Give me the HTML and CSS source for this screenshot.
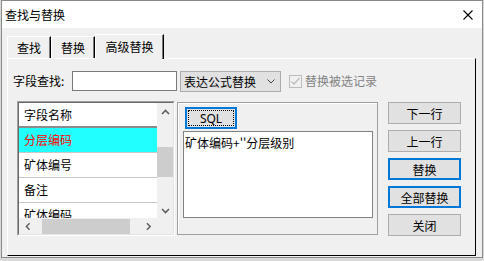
FILE: index.html
```html
<!DOCTYPE html>
<html lang="zh-CN">
<head>
    <meta charset="UTF-8">
    <meta name="viewport" content="width=device-width, initial-scale=1.0">
    <title>查找与替换</title>
    <link rel="stylesheet" href="styles.css">
</head>
<body>
    <div class="window">
        <div class="titlebar">
            <span class="title">查找与替换</span>
            <svg class="close" width="10" height="10" viewBox="0 0 10 10">
                <path d="M0.5 0.5 L9.5 9.5 M9.5 0.5 L0.5 9.5" stroke="#000" stroke-width="1.1" fill="none"/>
            </svg>
        </div>
        <div class="client">
            <div class="tabs">
                <div class="tab">查找</div>
                <div class="tab">替换</div>
                <div class="tab active">高级替换</div>
            </div>
            <div class="panel">
                <div class="search-row">
                    <span class="field-label">字段查找:</span>
                    <input class="field-input" type="text">
                    <div class="combo">
                        <span>表达公式替换</span>
                        <svg width="8" height="5" viewBox="0 0 8 5">
                            <path d="M0.5 0.5 L4 4 L7.5 0.5" stroke="#444" fill="none"/>
                        </svg>
                    </div>
                    <span class="checkbox">
                        <svg width="11" height="11" viewBox="0 0 11 11">
                            <path d="M1.5 5.5 L4 8 L9.5 2" stroke="#bdbdbd" stroke-width="1.3" fill="none"/>
                        </svg>
                    </span>
                    <span class="check-label">替换被选记录</span>
                </div>

                <div class="work-row">
                    <div class="list">
                        <div class="list-inner">
                            <div class="list-rows">
                                <div class="list-head">字段名称</div>
                                <div class="list-item selected">分层编码</div>
                                <div class="list-item">矿体编号</div>
                                <div class="list-item">备注</div>
                                <div class="list-item">矿体编码</div>
                            </div>
                            <div class="vscroll">
                                <svg class="arrow-up" width="9" height="6" viewBox="0 0 9 6">
                                    <path d="M1 5 L4.5 1.5 L8 5" stroke="#606060" stroke-width="1.6" fill="none"/>
                                </svg>
                                <div class="vthumb"></div>
                                <svg class="arrow-down" width="9" height="6" viewBox="0 0 9 6">
                                    <path d="M1 1 L4.5 4.5 L8 1" stroke="#606060" stroke-width="1.6" fill="none"/>
                                </svg>
                            </div>
                            <div class="hscroll">
                                <svg width="6" height="9" viewBox="0 0 6 9">
                                    <path d="M5 1 L1.5 4.5 L5 8" stroke="#606060" stroke-width="1.6" fill="none"/>
                                </svg>
                                <div class="hthumb"></div>
                                <svg width="6" height="9" viewBox="0 0 6 9">
                                    <path d="M1 1 L4.5 4.5 L1 8" stroke="#606060" stroke-width="1.6" fill="none"/>
                                </svg>
                            </div>
                            <div class="corner"></div>
                        </div>
                    </div>

                    <div class="group">
                        <button type="button" class="sql-button"><span>SQL</span></button>
                        <div class="expr">矿体编码+''分层级别</div>
                    </div>

                    <div class="actions">
                        <button type="button" class="btn">下一行</button>
                        <button type="button" class="btn">上一行</button>
                        <button type="button" class="btn default">替换</button>
                        <button type="button" class="btn default">全部替换</button>
                        <button type="button" class="btn">关闭</button>
                    </div>
                </div>
            </div>
        </div>
    </div>
</body>
</html>
```

FILE: styles.css
```css
* {
    box-sizing: border-box;
}
body {
    margin: 0;
    width: 484px;
    height: 261px;
    overflow: hidden;
    background-color: #d9d9d9;
    font-family: "Noto Sans CJK SC", "Noto Sans", sans-serif;
    font-size: 12px;
    color: #000;
}
.window {
    width: 482px;
    height: 258px;
    margin-left: 1px;
    border: 1px solid #8a8a8a;
    background-color: #f0f0f0;
}
.titlebar {
    height: 27px;
    background: #fff;
    display: flex;
    align-items: center;
    justify-content: space-between;
    padding: 0 9px 0 3px;
}
.title {
    line-height: 27px;
}
.close {
    display: block;
    margin-top: 1px;
}
.client {
    padding: 6px 6px 0 5px;
}
.tabs {
    display: flex;
    align-items: flex-end;
    height: 24px;
}
.tab {
    height: 22px;
    width: 44px;
    line-height: 21px;
    text-align: center;
    border-top: 1px solid #fff;
    border-left: 1px solid #fff;
    border-right: 1px solid #000;
    box-shadow: inset -1px 0 0 #7a7a7a;
    background: #f0f0f0;
}
.tab.active {
    width: 69px;
    height: 25px;
    line-height: 24px;
    margin-bottom: -1px;
    position: relative;
    z-index: 1;
}
.panel {
    height: 198px;
    border-top: 1px solid #fff;
    border-left: 1px solid #fff;
    border-right: 1px solid #000;
    border-bottom: 1px solid #000;
    padding: 12px 0 0 5px;
}
.search-row {
    display: flex;
    align-items: flex-start;
    height: 21px;
}
.field-label {
    width: 59px;
    line-height: 19px;
}
.field-input {
    width: 105px;
    height: 20px;
    margin: 0;
    border: 1px solid #7a7a7a;
    background: #fff;
    padding: 0 2px;
    font: inherit;
    outline: none;
}
.combo {
    width: 101px;
    height: 21px;
    margin-left: 3px;
    border: 1px solid #adadad;
    background: #e1e1e1;
    display: flex;
    align-items: center;
    justify-content: space-between;
    padding: 0 5px 0 3px;
    line-height: 19px;
}
.checkbox {
    width: 13px;
    height: 13px;
    margin: 4px 0 0 8px;
    border: 1px solid #bcbcbc;
    background: #f0f0f0;
    display: flex;
    align-items: center;
    justify-content: center;
}
.check-label {
    margin-left: 3px;
    color: #838383;
    line-height: 20px;
}
.work-row {
    display: flex;
    align-items: flex-start;
    margin: 9px 0 0 4px;
}
.list {
    width: 158px;
    height: 135px;
    border-top: 1px solid #a0a0a0;
    border-left: 1px solid #a0a0a0;
    border-right: 1px solid #fff;
    border-bottom: 1px solid #fff;
}
.list-inner {
    height: 133px;
    border-top: 1px solid #696969;
    border-left: 1px solid #696969;
    border-right: 1px solid #e3e3e3;
    border-bottom: 1px solid #e3e3e3;
    display: grid;
    grid-template-columns: 138px 16px;
    grid-template-rows: 115px 16px;
}
.list-rows {
    background: #fff;
    overflow: hidden;
}
.list-head {
    height: 25px;
    line-height: 23px;
    padding-left: 5px;
    border-bottom: 2px solid #8c8c8c;
}
.list-item {
    height: 25px;
    line-height: 24px;
    padding-left: 5px;
    border-bottom: 1px solid #c8c8c8;
}
.list-item.selected {
    background: #22ffff;
    color: #ff0000;
}
.vscroll {
    background: #f0f0f0;
    display: flex;
    flex-direction: column;
    align-items: center;
}
.arrow-up {
    margin-top: 6px;
}
.vthumb {
    width: 16px;
    height: 30px;
    margin-top: 32px;
    background: #cdcdcd;
}
.arrow-down {
    margin-top: 31px;
}
.hscroll {
    background: #f0f0f0;
    display: flex;
    align-items: center;
    padding: 0 6px 0 6px;
}
.hthumb {
    width: 96px;
    height: 15px;
    margin: 0 16px 0 11px;
    background: #cdcdcd;
}
.corner {
    background: #f0f0f0;
}
.group {
    width: 201px;
    height: 133px;
    margin: 1px 0 0 2px;
    border: 1px solid #a0a0a0;
    box-shadow: inset 1px 1px 0 #fff;
    padding: 4px 0 0 7px;
}
.sql-button {
    display: block;
    width: 52px;
    height: 22px;
    margin: 0;
    padding: 1px;
    border: 2px solid #0078d7;
    background: #e1e1e1;
    font: inherit;
}
.sql-button span {
    display: block;
    height: 16px;
    line-height: 15px;
    border: 1px dotted #000;
    font-family: "Noto Sans", sans-serif;
    font-size: 12px;
}
.expr {
    width: 190px;
    height: 87px;
    margin: 2px 0 0 -2px;
    border: 1px solid #828282;
    background: #fff;
    padding: 2px 0 0 1px;
    line-height: 18px;
}
.actions {
    display: flex;
    flex-direction: column;
    gap: 6px;
    margin: 1px 0 0 10px;
}
.btn {
    width: 73px;
    height: 22px;
    margin: 0;
    padding: 0;
    border: 1px solid #adadad;
    background: #e1e1e1;
    font: inherit;
    line-height: 19px;
}
.btn.default {
    border: 2px solid #0078d7;
}
```
